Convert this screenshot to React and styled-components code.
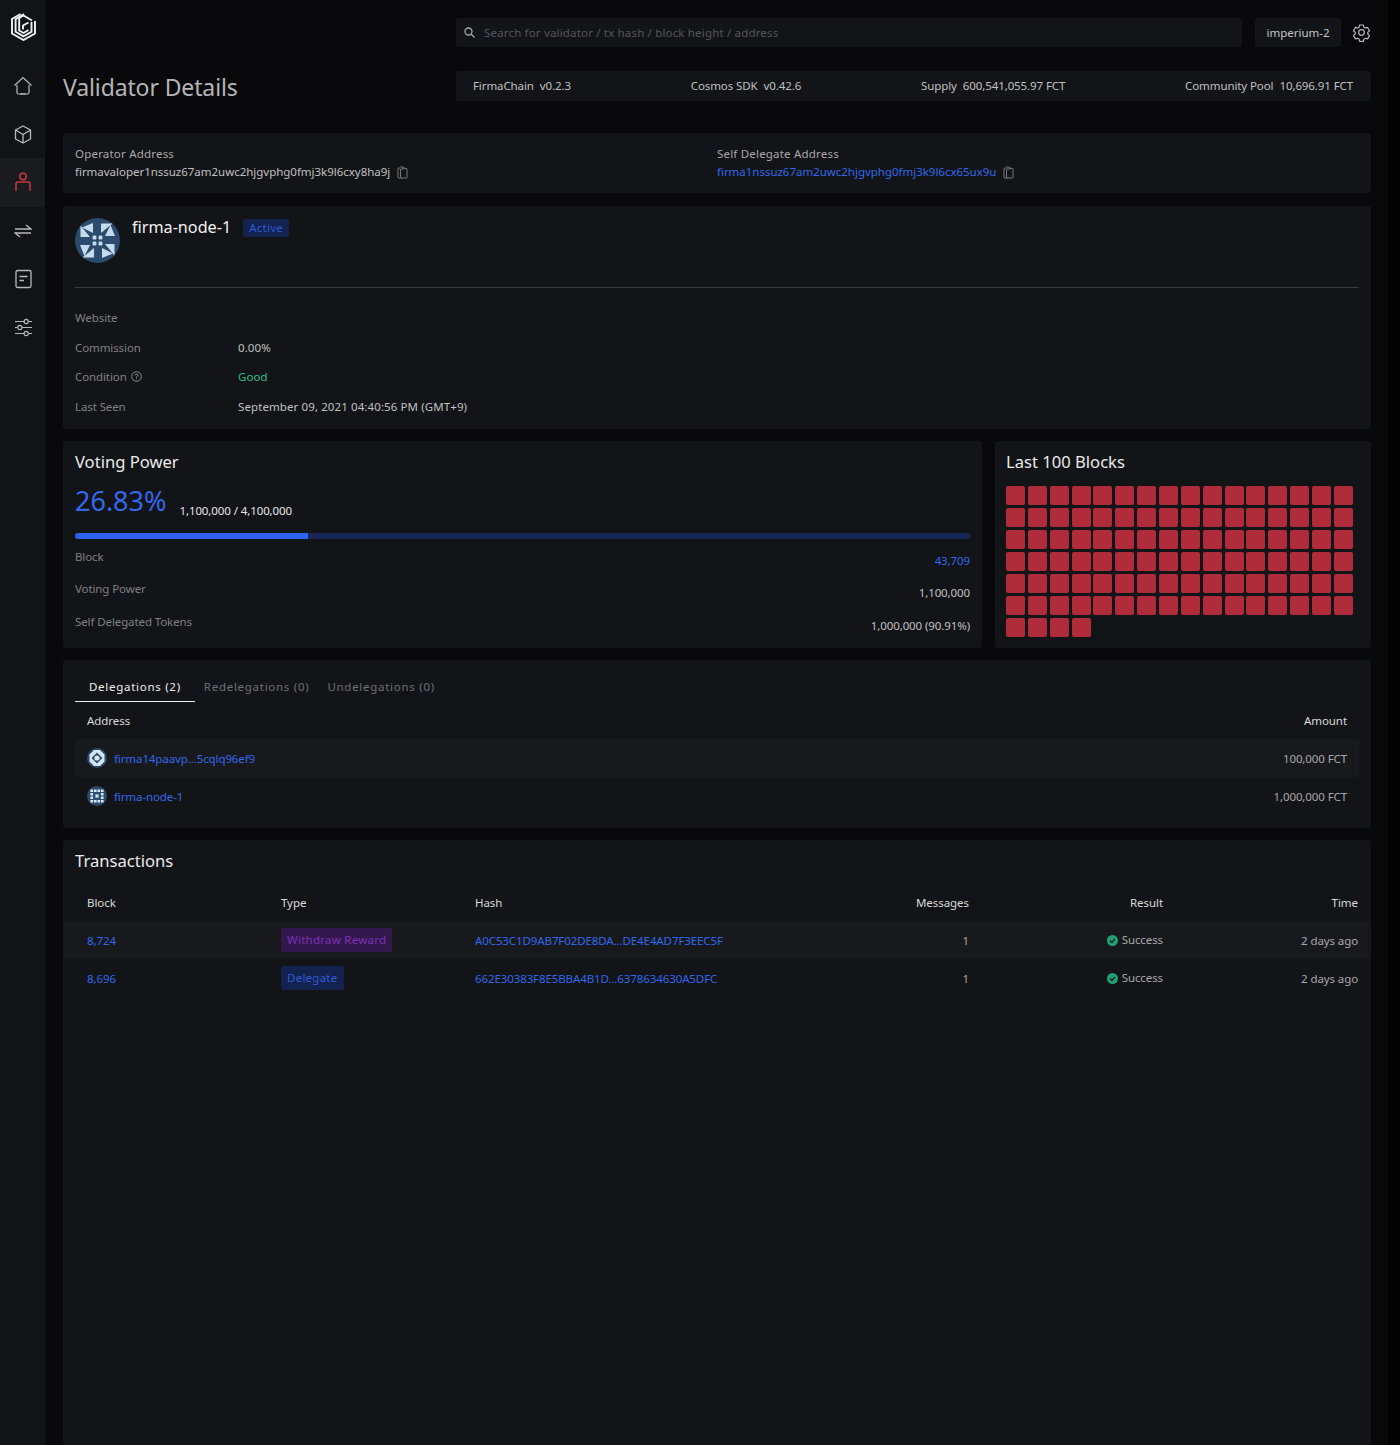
import React from "react";
import styled, { createGlobalStyle } from "styled-components";

const GlobalStyle = createGlobalStyle`
  html, body {
    margin: 0;
    padding: 0;
    height: 1445px;
    overflow: hidden;
    background: #09090b;
  }
  * { box-sizing: border-box; }
  body {
    font-family: "Noto Sans", "Open Sans", sans-serif;
    color: #c4c4c6;
  }
`;

const Layout = styled.div`
  display: flex;
  height: 1445px;
  width: 1400px;
`;

const Sidebar = styled.aside`
  width: 45px;
  flex: none;
  background: #121316;
  display: flex;
  flex-direction: column;
  align-items: center;
`;

const LogoBox = styled.div`
  height: 62px;
  width: 100%;
  display: flex;
  justify-content: center;
  padding: 13px 0 0 1px;
`;

const NavItem = styled.div`
  width: 100%;
  height: 48.2px;
  display: flex;
  align-items: center;
  justify-content: center;
  padding-left: 1px;
  color: ${(props) => (props.$active ? "#c9363f" : "#b9b9bb")};
  background: ${(props) => (props.$active ? "#1a1b1f" : "transparent")};
`;

const Main = styled.main`
  flex: 1;
  min-width: 0;
  padding: 18px 29px 0 18px;
  display: flex;
  flex-direction: column;
  gap: 12px;
  position: relative;
`;

const ScrollEdge = styled.div`
  position: absolute;
  top: 0;
  right: 0;
  bottom: 0;
  width: 12px;
  background: #020203;
`;

const Header = styled.header`
  display: grid;
  grid-template-columns: 393px 1fr;
  height: 103px;
`;

const PageTitle = styled.h1`
  margin: 55px 0 0;
  font-size: 23px;
  line-height: 29px;
  font-weight: 400;
  color: #b5b5b7;
  letter-spacing: -0.12px;
`;

const HeaderRight = styled.div`
  display: flex;
  flex-direction: column;
  gap: 24px;
`;

const TopRow = styled.div`
  display: flex;
  align-items: center;
  height: 29px;
`;

const Search = styled.div`
  flex: 1;
  height: 29px;
  background: #131417;
  border-radius: 3px;
  display: flex;
  align-items: center;
  gap: 9px;
  padding: 0 0 1px 8px;
  font-size: 11.5px;
  color: #55565a;
  letter-spacing: 0.17px;
`;

const NetworkButton = styled.div`
  margin-left: 13px;
  width: 86px;
  height: 29px;
  background: #131417;
  border-radius: 3px;
  padding-bottom: 1px;
  display: flex;
  align-items: center;
  justify-content: center;
  font-size: 11.5px;
  color: #c4c4c6;
  letter-spacing: 0;
`;

const GearBox = styled.div`
  width: 30px;
  display: flex;
  justify-content: flex-end;
  color: #b9b9bb;
`;

const StatusBar = styled.div`
  height: 30px;
  background: #131417;
  border-radius: 3px;
  display: flex;
  align-items: center;
  justify-content: space-between;
  padding: 0 18px 1px 17px;
  font-size: 11.5px;
  color: #c0c0c2;
  letter-spacing: -0.1px;
`;

const Stat = styled.span`
  display: flex;
  gap: 6px;
`;

const Card = styled.section`
  background: #131417;
  border-radius: 3px;
  padding: 12px;
  flex: ${(props) => (props.$grow ? 1 : "none")};
`;

const AddressCard = styled(Card)`
  height: 60px;
  margin-bottom: 1px;
  display: grid;
  grid-template-columns: 642px 1fr;
`;

const AddressLabel = styled.div`
  font-size: 11.5px;
  line-height: 18px;
  color: #a8a8aa;
  letter-spacing: 0.2px;
`;

const AddressValue = styled.div`
  display: flex;
  align-items: center;
  gap: 7px;
  font-size: 11.5px;
  line-height: 18px;
  letter-spacing: -0.02px;
  color: ${(props) => (props.$link ? "#3268ec" : "#c0c0c2")};
`;

const CopyIcon = styled.span`
  color: #77787b;
  display: flex;
`;

const ProfileCard = styled(Card)`
  height: 223px;
`;

const ProfileHead = styled.div`
  display: flex;
  gap: 12px;
  height: 70px;
  border-bottom: 1px solid #3a3b3e;
`;

const NodeName = styled.div`
  margin-top: -1px;
  font-size: 16.2px;
  line-height: 20px;
  color: #f1f1f2;
`;

const NameRow = styled.div`
  display: flex;
  gap: 12px;
  align-items: flex-start;
`;

const Badge = styled.span`
  display: inline-block;
  height: ${(props) => props.$height || "18px"};
  line-height: ${(props) => props.$height || "18px"};
  padding: 0 6px;
  border-radius: 2px;
  font-size: 11.5px;
  letter-spacing: 0.25px;
  color: ${(props) => props.$color};
  background: ${(props) => props.$bg};
`;

const NameBadge = styled(Badge)`
  margin-top: 1px;
`;

const BadgeCell = styled.span`
  display: flex;
  align-items: center;
`;

const Details = styled.div`
  display: flex;
  flex-direction: column;
  padding-top: 14.5px;
`;

const DetailRow = styled.div`
  display: grid;
  grid-template-columns: 163px 1fr;
  height: 29.7px;
  align-items: center;
  font-size: 11.5px;
  letter-spacing: 0.1px;
`;

const DetailLabel = styled.span`
  color: #7f8083;
  display: flex;
  align-items: center;
  gap: 4px;
  letter-spacing: -0.1px;
`;

const DetailValue = styled.span`
  color: ${(props) => props.$color || "#c0c0c2"};
`;

const PowerRow = styled.div`
  display: grid;
  grid-template-columns: 919px 376px;
  gap: 13px;
`;

const PowerCard = styled(Card)`
  height: 207px;
`;

const BlocksCard = styled(PowerCard)`
  padding-left: 11px;
`;

const CardTitle = styled.h2`
  margin: -1px 0 0;
  font-size: 16.6px;
  line-height: 20px;
  font-weight: 400;
  color: #eaeaeb;
`;

const PercentRow = styled.div`
  display: flex;
  align-items: flex-start;
  gap: 13px;
  margin-top: 10px;
  height: 38px;
`;

const Percent = styled.span`
  font-size: 27px;
  line-height: 38px;
  color: #3268ec;
`;

const PowerCount = styled.span`
  padding-top: 21px;
  font-size: 11.5px;
  line-height: 16px;
  letter-spacing: -0.1px;
  color: #e4e4e5;
`;

const ProgressTrack = styled.div`
  margin-top: 13px;
  height: 6px;
  border-radius: 3px;
  background: #18265a;
  overflow: hidden;
`;

const ProgressFill = styled.div`
  height: 100%;
  background: #2f62ea;
`;

const PowerRows = styled.div`
  display: flex;
  flex-direction: column;
  margin-top: 10px;
`;

const PowerLine = styled.div`
  display: flex;
  justify-content: space-between;
  height: 32.4px;
  font-size: 11.5px;
  letter-spacing: -0.1px;
`;

const PowerLabel = styled.span`
  color: #7f8083;
  line-height: 16px;
`;

const PowerValue = styled.span`
  color: ${(props) => props.$color || "#c0c0c2"};
  line-height: 16px;
  padding-top: 4px;
`;

const BlockGrid = styled.div`
  display: grid;
  grid-template-columns: repeat(16, 19px);
  grid-auto-rows: 19px;
  gap: 3px 2.87px;
  margin-top: 14px;
`;

const BlockCell = styled.div`
  background: #b12c3a;
  border-radius: 2px;
`;

const Tabs = styled.div`
  display: flex;
  height: 29px;
`;

const Tab = styled.div`
  padding: 0 14px;
  margin-right: ${(props) => (props.$active ? "-5px" : "-10px")};
  line-height: 30px;
  font-size: 11.5px;
  letter-spacing: 0.72px;
  color: ${(props) => (props.$active ? "#eeeeef" : "#6f7073")};
  border-bottom: ${(props) => (props.$active ? "1px solid #eeeeef" : "none")};
  height: 30px;
`;

const TableHead = styled.div`
  display: grid;
  grid-template-columns: ${(props) => props.$columns};
  height: 38px;
  align-items: center;
  padding: 0 12px;
  font-size: 11.5px;
  letter-spacing: -0.05px;
  color: #dadadb;
`;

const TableRow = styled.div`
  display: grid;
  grid-template-columns: ${(props) => props.$columns};
  height: 38px;
  align-items: center;
  padding: 0 12px;
  font-size: 11.5px;
  letter-spacing: -0.1px;
  background: ${(props) => (props.$striped ? "#18191d" : "transparent")};
`;

const TxHead = styled(TableHead)`
  padding: 0 13px 0 24px;
`;

const TxRow = styled(TableRow)`
  padding: 0 13px 0 24px;
`;

const Right = styled.span`
  text-align: right;
`;

const Muted = styled(Right)`
  color: #a8a8aa;
`;

const Link = styled.span`
  color: #3268ec;
`;

const DelegatorCell = styled.div`
  display: flex;
  align-items: center;
  gap: 7px;
`;

const DelegationsCard = styled(Card)`
  height: 168px;
`;

const TxCard = styled(Card)`
  padding: 12px 0 0;
`;

const TxTitle = styled(CardTitle)`
  padding: 0 12px;
  margin-bottom: 12px;
`;

const ResultCell = styled.span`
  display: flex;
  justify-content: flex-end;
  align-items: center;
  gap: 4px;
  padding-bottom: 2px;
  color: #a8a8aa;

  svg {
    margin-top: 2px;
  }
`;

const Logo = () => (
  <svg width="25" height="28" viewBox="0 0 25 28" fill="none" stroke="#f2f2f2" strokeWidth="1.9">
    <path d="M9.5 1 L1 6 V20.5 L12.5 27 L24 20.5 V8" />
    <path d="M13 1 L4.6 6.2 V18.8 L12.5 23.3 L20.5 18.8 V9" />
    <path d="M21 7.5 L12.5 2.5 L8.2 5 V17.5 L12.5 20 L17.5 17" />
    <path d="M17.5 9.5 L12 12.5 V16.5" />
  </svg>
);

const HomeIcon = () => (
  <svg width="20" height="20" viewBox="0 0 20 20" fill="none" stroke="currentColor" strokeWidth="1.2">
    <path d="M1.5 9.5 L10 1.5 L18.5 9.5" />
    <path d="M4 9 V16.5 Q4 18 5.5 18 H14.5 Q16 18 16 16.5 V9" />
    <path d="M7 18 H13" />
  </svg>
);

const BoxIcon = () => (
  <svg width="18" height="19" viewBox="0 0 18 19" fill="none" stroke="currentColor" strokeWidth="1.3">
    <path d="M9 1 L16.5 5 V14 L9 18 L1.5 14 V5 Z" strokeLinejoin="round" />
    <path d="M1.5 5 L9 9.5 L16.5 5 M9 9.5 V18" />
  </svg>
);

const UserIcon = () => (
  <svg width="18" height="20" viewBox="0 0 18 20" fill="none" stroke="currentColor" strokeWidth="1.5">
    <circle cx="9" cy="4.5" r="3.2" />
    <path d="M2 19 V12 Q2 10 4 10 H14 Q16 10 16 12 V19" />
  </svg>
);

const TransferIcon = () => (
  <svg width="18" height="14" viewBox="0 0 18 14" fill="none" stroke="currentColor" strokeWidth="1.3">
    <path d="M1 5 H17 L12 1" />
    <path d="M17 9 H1 L6 13" />
  </svg>
);

const DocIcon = () => (
  <svg width="17" height="20" viewBox="0 0 17 20" fill="none" stroke="currentColor" strokeWidth="1.3">
    <rect x="1" y="1.5" width="15" height="17" rx="1.5" />
    <path d="M4.5 7.5 H12.5 M4.5 11.5 H9" />
  </svg>
);

const SliderIcon = () => (
  <svg width="19" height="19" viewBox="0 0 19 19" fill="none" stroke="currentColor" strokeWidth="1.2">
    <path d="M1 3.5 H10 M14.5 3.5 H18 M1 9.5 H3.5 M8 9.5 H18 M1 15.5 H10 M14.5 15.5 H18" />
    <circle cx="12.2" cy="3.5" r="2.1" />
    <circle cx="5.8" cy="9.5" r="2.1" />
    <circle cx="12.2" cy="15.5" r="2.1" />
  </svg>
);

const SearchIcon = () => (
  <svg width="11" height="11" viewBox="0 0 11 11" fill="none" stroke="#a8a8aa" strokeWidth="1.3">
    <circle cx="4.5" cy="4.5" r="3.5" />
    <path d="M7 7 L10.5 10.5" />
  </svg>
);

const GearIcon = () => (
  <svg width="19" height="19" viewBox="0 0 24 24" fill="none" stroke="currentColor" strokeWidth="1.5" strokeLinejoin="round">
    <path d="M9.6 2.5 h4.8 l.7 2.9 1.7 1 2.9-.8 2.4 4.2-2.2 2.1 v1.9 l2.2 2.1-2.4 4.2-2.9-.8-1.7 1-.7 2.9 H9.6 l-.7-2.9-1.7-1-2.9.8-2.4-4.2 2.2-2.1 v-1.9 l-2.2-2.1 2.4-4.2 2.9.8 1.7-1 Z" />
    <circle cx="12" cy="12" r="3.6" />
  </svg>
);

const CopyGlyph = () => (
  <svg width="11" height="13" viewBox="0 0 11 13" fill="none" stroke="currentColor" strokeWidth="1">
    <path d="M3 2 H1.5 Q1 2 1 2.5 V11.5 Q1 12 1.5 12 H5" />
    <path d="M3 1 H6 L7.5 2.5 H9.5 Q10 2.5 10 3 V11.5 Q10 12 9.5 12 H5 Q3.5 12 3.5 11 V3 H7 V1" />
  </svg>
);

const HelpIcon = () => (
  <svg width="11" height="11" viewBox="0 0 11 11" fill="none" stroke="#9a9a9c" strokeWidth="0.9">
    <circle cx="5.5" cy="5.5" r="4.8" />
    <path d="M4 4.3 Q4.2 3 5.5 3 Q7 3 7 4.2 Q7 5 5.5 5.6 V6.6 M5.5 7.5 V8.3" />
  </svg>
);

const NodeAvatar = () => (
  <svg width="45" height="45" viewBox="0 0 45 45">
    <circle cx="22.5" cy="22.5" r="22.5" fill="#2d4b6c" />
    <g fill="#c5dcef">
      {[0, 90, 180, 270].map((angle) => (
        <g key={angle} transform={`rotate(${angle} 22.5 22.5)`}>
          <path d="M7 9.5 L18 5 V15 Z" />
          <path d="M26 5.5 H37.5 L26 15 Z" />
        </g>
      ))}
      <rect x="17.6" y="17.6" width="3.8" height="3.8" rx="1.2" />
      <rect x="23.6" y="17.6" width="3.8" height="3.8" rx="1.2" />
      <rect x="17.6" y="23.6" width="3.8" height="3.8" rx="1.2" />
      <rect x="23.6" y="23.6" width="3.8" height="3.8" rx="1.2" />
    </g>
  </svg>
);

const SmallAvatar = ({ variant }) => (
  <svg width="20" height="20" viewBox="0 0 20 20">
    <circle cx="10" cy="10" r="10" fill="#2d4b6c" />
    {variant === "ring" ? (
      <g fill="#d5e6f3">
        <path d="M7 2 H13 L17.5 6.5 V13.5 L13 18 H7 L2.5 13.5 V6.5 Z M10 4.5 L4.5 10 L10 15.5 L15.5 10 Z" fillRule="evenodd" />
        <circle cx="10" cy="10" r="2.6" />
      </g>
    ) : (
      <g fill="#d5e6f3">
        {[3.4, 6.9, 10.4, 13.9].flatMap((x) =>
          [3.4, 6.9, 10.4, 13.9]
            .filter((y) => x === 3.4 || x === 13.9 || y === 3.4 || y === 13.9)
            .map((y) => <rect key={`${x}-${y}`} x={x} y={y} width="2.7" height="2.7" rx="0.5" />)
        )}
        <rect x="8.4" y="8.4" width="3.2" height="3.2" />
      </g>
    )}
  </svg>
);

const SuccessIcon = () => (
  <svg width="11" height="11" viewBox="0 0 11 11">
    <circle cx="5.5" cy="5.5" r="5.5" fill="#22a074" />
    <path d="M3 5.6 L4.9 7.4 L8 3.9" fill="none" stroke="#10231d" strokeWidth="1.4" />
  </svg>
);

const delegationColumns = "1fr 200px";
const txColumns = "194px 194px 1fr 165px 194px 195px";

const blocks = Array.from({ length: 100 }, (_, i) => i);

const App = () => {
  return (
    <Layout>
      <GlobalStyle />
      <Sidebar>
        <LogoBox>
          <Logo />
        </LogoBox>
        <NavItem><HomeIcon /></NavItem>
        <NavItem><BoxIcon /></NavItem>
        <NavItem $active><UserIcon /></NavItem>
        <NavItem><TransferIcon /></NavItem>
        <NavItem><DocIcon /></NavItem>
        <NavItem><SliderIcon /></NavItem>
      </Sidebar>
      <Main>
        <ScrollEdge />
        <Header>
          <PageTitle>Validator Details</PageTitle>
          <HeaderRight>
            <TopRow>
              <Search>
                <SearchIcon />
                Search for validator / tx hash / block height / address
              </Search>
              <NetworkButton>imperium-2</NetworkButton>
              <GearBox><GearIcon /></GearBox>
            </TopRow>
            <StatusBar>
              <Stat><span>FirmaChain</span><span>v0.2.3</span></Stat>
              <Stat><span>Cosmos SDK</span><span>v0.42.6</span></Stat>
              <Stat><span>Supply</span><span>600,541,055.97 FCT</span></Stat>
              <Stat><span>Community Pool</span><span>10,696.91 FCT</span></Stat>
            </StatusBar>
          </HeaderRight>
        </Header>

        <AddressCard>
          <div>
            <AddressLabel>Operator Address</AddressLabel>
            <AddressValue>
              firmavaloper1nssuz67am2uwc2hjgvphg0fmj3k9l6cxy8ha9j
              <CopyIcon><CopyGlyph /></CopyIcon>
            </AddressValue>
          </div>
          <div>
            <AddressLabel>Self Delegate Address</AddressLabel>
            <AddressValue $link>
              firma1nssuz67am2uwc2hjgvphg0fmj3k9l6cx65ux9u
              <CopyIcon><CopyGlyph /></CopyIcon>
            </AddressValue>
          </div>
        </AddressCard>

        <ProfileCard>
          <ProfileHead>
            <NodeAvatar />
            <NameRow>
              <NodeName>firma-node-1</NodeName>
              <NameBadge $color="#2f5ad6" $bg="#14224f">Active</NameBadge>
            </NameRow>
          </ProfileHead>
          <Details>
            <DetailRow><DetailLabel>Website</DetailLabel><DetailValue /></DetailRow>
            <DetailRow><DetailLabel>Commission</DetailLabel><DetailValue>0.00%</DetailValue></DetailRow>
            <DetailRow>
              <DetailLabel>Condition <HelpIcon /></DetailLabel>
              <DetailValue $color="#2fbf85">Good</DetailValue>
            </DetailRow>
            <DetailRow>
              <DetailLabel>Last Seen</DetailLabel>
              <DetailValue>September 09, 2021 04:40:56 PM (GMT+9)</DetailValue>
            </DetailRow>
          </Details>
        </ProfileCard>

        <PowerRow>
          <PowerCard>
            <CardTitle>Voting Power</CardTitle>
            <PercentRow>
              <Percent>26.83%</Percent>
              <PowerCount>1,100,000 / 4,100,000</PowerCount>
            </PercentRow>
            <ProgressTrack>
              <ProgressFill style={{ width: "26%" }} />
            </ProgressTrack>
            <PowerRows>
              <PowerLine><PowerLabel>Block</PowerLabel><PowerValue $color="#3268ec">43,709</PowerValue></PowerLine>
              <PowerLine><PowerLabel>Voting Power</PowerLabel><PowerValue>1,100,000</PowerValue></PowerLine>
              <PowerLine><PowerLabel>Self Delegated Tokens</PowerLabel><PowerValue>1,000,000 (90.91%)</PowerValue></PowerLine>
            </PowerRows>
          </PowerCard>
          <BlocksCard>
            <CardTitle>Last 100 Blocks</CardTitle>
            <BlockGrid>
              {blocks.map((b) => <BlockCell key={b} />)}
            </BlockGrid>
          </BlocksCard>
        </PowerRow>

        <DelegationsCard>
          <Tabs>
            <Tab $active>Delegations (2)</Tab>
            <Tab>Redelegations (0)</Tab>
            <Tab>Undelegations (0)</Tab>
          </Tabs>
          <TableHead $columns={delegationColumns}>
            <span>Address</span>
            <Right>Amount</Right>
          </TableHead>
          <TableRow $columns={delegationColumns} $striped>
            <DelegatorCell><SmallAvatar variant="ring" /><Link>firma14paavp...5cqlq96ef9</Link></DelegatorCell>
            <Muted>100,000 FCT</Muted>
          </TableRow>
          <TableRow $columns={delegationColumns}>
            <DelegatorCell><SmallAvatar variant="dots" /><Link>firma-node-1</Link></DelegatorCell>
            <Muted>1,000,000 FCT</Muted>
          </TableRow>
        </DelegationsCard>

        <TxCard $grow>
          <TxTitle>Transactions</TxTitle>
          <TxHead $columns={txColumns}>
            <span>Block</span>
            <span>Type</span>
            <span>Hash</span>
            <Right>Messages</Right>
            <Right>Result</Right>
            <Right>Time</Right>
          </TxHead>
          <TxRow $columns={txColumns} $striped>
            <Link>8,724</Link>
            <BadgeCell><Badge $height="24px" $color="#7a32b8" $bg="#34184d">Withdraw Reward</Badge></BadgeCell>
            <Link>A0C53C1D9AB7F02DE8DA...DE4E4AD7F3EEC5F</Link>
            <Muted>1</Muted>
            <ResultCell><SuccessIcon />Success</ResultCell>
            <Muted>2 days ago</Muted>
          </TxRow>
          <TxRow $columns={txColumns}>
            <Link>8,696</Link>
            <BadgeCell><Badge $height="24px" $color="#2f5ad6" $bg="#14224f">Delegate</Badge></BadgeCell>
            <Link>662E30383F8E5BBA4B1D...6378634630A5DFC</Link>
            <Muted>1</Muted>
            <ResultCell><SuccessIcon />Success</ResultCell>
            <Muted>2 days ago</Muted>
          </TxRow>
        </TxCard>
      </Main>
    </Layout>
  );
};

export default App;
